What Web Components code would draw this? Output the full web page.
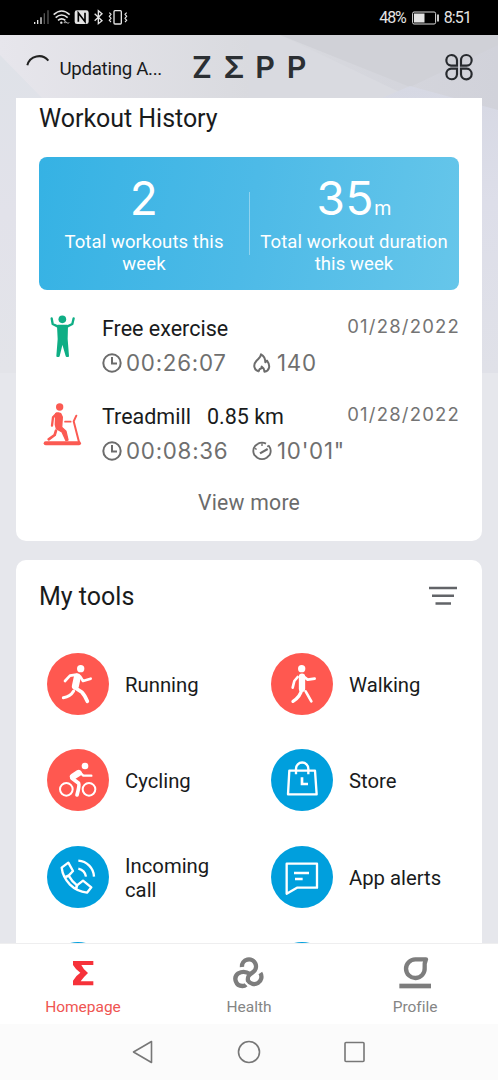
<!DOCTYPE html>
<html lang="en">
<head>
<meta charset="utf-8">
<title>Zepp</title>
<style>
html,body{margin:0;padding:0}
body{width:498px;height:1080px;overflow:hidden;font-family:Roboto,sans-serif;background:#e6e7ec;color:#191b1c}
</style>
</head>
<body>
<zepp-app></zepp-app>
<script>
const define=(name,html)=>customElements.define(name,class extends HTMLElement{
  constructor(){super();this.attachShadow({mode:'open'}).innerHTML=html;}
});

define('status-bar',`<style>
:host{display:flex;height:35px;box-sizing:border-box;background:#000;color:#e4e4e4;justify-content:space-between;align-items:center;padding:0 27px 0 33px;font-size:16px}
.r{display:flex;align-items:center;height:35px}
svg{display:block}
</style>
<svg width="96" height="18" viewBox="99 27 288 54" fill="none" stroke="#e4e4e4" stroke-width="4">
<path d="M104 66v6M113 60v12M123 52v20"/><path d="M133 40v32M144 31v41" stroke="#555"/>
<path d="M161 44Q185 22 209 44M167 53Q185 37 203 53M174 61Q185 52 196 61" stroke-width="5"/><circle cx="184" cy="68" r="3.500" fill="#e4e4e4" stroke="none"/><path d="M192 68l4-5 4 5zM200 66l4 5 4-5" stroke-width="2"/>
<rect x="224" y="31" width="42" height="41" rx="7" fill="#e4e4e4" stroke="none"/><path d="M235 65V39l20 26V38" stroke="#000" stroke-width="5"/>
<path d="M284 41l22 21-11 9V32l11 9-22 21"/>
<rect x="342" y="32" width="22" height="40" rx="3"/><path d="M328 38l5 5-5 6 5 6-5 6 5 5M380 38l-5 5 5 6-5 6 5 6-5 5" stroke-width="3.500"/>
</svg>
<div class="r"><span style="letter-spacing:-1.100px;margin-right:3px">48%</span>
<svg width="27" height="14" viewBox="0 0 27 14" style="margin:0 5px 0 3px"><rect x=".6" y="1" width="23" height="12" rx="1.500" fill="none" stroke="#ddd"/><path d="M2 2.500h10.500v9H2z" fill="#e4e4e4"/><path d="M26 3.500v7" stroke="#ddd" stroke-width="1.800"/></svg>
<span style="letter-spacing:-.9px">8:51</span></div>`);

define('app-header',`<style>
:host{display:grid;grid-template-columns:26px 33px 133px 1fr 30px;height:63px;box-sizing:border-box;padding-right:24px;align-items:center}
svg{display:block}
.u{font-size:18.700px;letter-spacing:-.3px;padding:4px 0 0 .5px;white-space:nowrap}
.logo{display:flex;font:600 30.500px/30px Inter,sans-serif;color:#2b2f33;padding-top:1px}
.logo span{width:31.600px}
</style>
<i></i>
<svg width="24" height="14" viewBox="78 156 72 42" style="margin-top:-13px"><path d="M82 193A36 36 0 0 1 145 179" fill="none" stroke="#222" stroke-width="6"/></svg>
<span class="u">Updating A...</span>
<div class="logo"><span>Z</span><span>Σ</span><span>P</span><span>P</span></div>
<svg width="30" height="30" viewBox="585 157 90 90" fill="none" stroke="#272a2e" stroke-width="6.500"><path d="M624 198H606A16 16 0 1 1 624 182zM636 198H653A16 16 0 1 0 636 182zM624 207H606A16 16 0 1 0 624 224zM636 207H653A16 16 0 1 1 636 224z"/></svg>`);

define('stat-box',`<style>
:host{display:block;text-align:center;color:#fff;font-size:18.500px;line-height:22px;letter-spacing:.1px;padding-top:20px}
.n{font:400 46px/42px Inter,sans-serif;letter-spacing:.6px;height:42px;margin-bottom:12px}
</style><div class="n"><slot name="value"></slot></div><slot></slot>`);

define('workout-row',`<style>
:host{display:grid;grid-template-columns:63px 1fr;height:87.500px}
.ic{width:48px;height:52px}
.top{display:flex;justify-content:space-between;height:34px;align-items:center;font-size:21.500px;line-height:34px;white-space:pre}
.top .d{font:400 18.500px/29px Inter,sans-serif;letter-spacing:1.200px;margin-right:-1px;color:#747474;height:34px}
.meta{display:flex;height:34px;align-items:center;color:#6f6f6f;font:400 22.300px/34px Inter,sans-serif;letter-spacing:.75px}
</style><div class="ic"><slot name="icon"></slot></div>
<div><div class="top"><span><slot name="title"></slot></span><span class="d"><slot name="date"></slot></span></div><div class="meta"><slot></slot></div></div>`);

define('history-card',`<style>
:host{display:block;height:443px;box-sizing:border-box;background:#fff;margin:0 16px;padding:0 23px;border-radius:0 0 10px 10px}
h2{margin:0;font-weight:400;font-size:25px;line-height:42px;height:59px;letter-spacing:-.04px}
.b{display:grid;grid-template-columns:210px 1fr;height:133px;border-radius:8px;background:linear-gradient(100deg,#35b2e4,#4dbae7 50%,#66c6ea);position:relative;margin-bottom:22px}
.b i{position:absolute;left:209.500px;top:35px;width:1.500px;height:63px;background:#8fd3ef}
.m{font-size:20px;line-height:0;font-weight:400;letter-spacing:0}
svg{display:block}
.clk{width:20px;height:20px;margin-right:4px}
.v{width:126px}
.more{text-align:center;color:#6b6b6b;font-size:21.200px;line-height:31px;letter-spacing:.25px}
</style>
<h2>Workout History</h2>
<div class="b"><stat-box><span slot="value">2</span>Total workouts this<br>week</stat-box><stat-box><span slot="value">35<span class="m">m</span></span>Total workout duration<br>this week</stat-box><i></i></div>
<workout-row>
<svg slot="icon" width="48" height="52" viewBox="27 36 144 156" fill="none" stroke="#0fae85" stroke-linecap="round" stroke-linejoin="round"><circle cx="97" cy="58" r="11.500" fill="#0fae85" stroke="none"/><path d="M65 55l3 17 16 8h27l16-8 4-17" stroke-width="7"/><path d="M84 77h27l-1 40 4 51h-4l-13-45-11 45h-4l4-51z" fill="#0fae85" stroke-width="6"/></svg>
<span slot="title">Free exercise</span><span slot="date">01/28/2022</span>
<svg class="clk" viewBox="0 0 20 20" fill="none" stroke="#6c6c6c" stroke-width="2"><circle cx="10" cy="10" r="8.700"/><path d="M10 4v6.500h5"/></svg><span class="v">00:26:07</span>
<svg width="20" height="20" viewBox="37 156 60 60" fill="none" stroke="#6c6c6c" stroke-width="6" stroke-linejoin="round" style="margin-right:5px"><path d="M58 212C42 207 40 191 50 180C59 171 64 168 64 160C75 166 77 174 77 184L82 179C93 194 90 209 74 212Q75 203 66 197Q66 203 60 204Q57 208 58 212"/></svg><span>140</span>
</workout-row>
<workout-row>
<svg slot="icon" width="48" height="52" viewBox="27 299 144 156" fill="none" stroke="#fb5a52" stroke-linecap="round" stroke-linejoin="round"><circle cx="89" cy="320" r="11" fill="#fb5a52" stroke="none"/><path d="M47 429h100" stroke-width="12"/><path d="M139 346l-8 17 16 62" stroke-width="6"/><path d="M105 364h17" stroke-width="5"/><path d="M80 340l-11 11-3 25" stroke-width="7"/><path d="M77 340q7-5 15 0l5 10-2 31 13 12 6 26-6 2-12-26-17-10-3-12z" fill="#fb5a52" stroke-width="4"/><path d="M78 391l-4 13-18 13" stroke-width="8"/></svg>
<span slot="title">Treadmill   0.85 km</span><span slot="date">01/28/2022</span>
<svg class="clk" viewBox="0 0 20 20" fill="none" stroke="#6c6c6c" stroke-width="2"><circle cx="10" cy="10" r="8.700"/><path d="M10 4v6.500h5"/></svg><span class="v">00:08:36</span>
<svg width="20" height="20" viewBox="37 420 60 60" fill="none" stroke="#6c6c6c" stroke-width="5.500" style="margin-right:5px"><path d="M55 428A26 26 0 0 1 79 428M87 434A26 26 0 0 1 90 462L81 470A26 26 0 0 1 53 470L44 462A26 26 0 0 1 47 434L55 428"/><path d="M61 457l23-13" stroke-width="6.500"/><path d="M67 427v8M45 442l6 3M87 433l-4 4" stroke-width="4"/></svg><span>10'01"</span>
</workout-row>
<div class="more">View more</div>`);

define('tool-item',`<style>
:host{display:flex;align-items:center;gap:16px;height:96.400px;font-size:20.300px;line-height:24px}
.c{width:62px;height:62px;border-radius:50%;background:var(--c,#009fdd);flex:none}
.t{width:100px;padding-top:2px}
</style><div class="c"><slot name="icon"></slot></div><div class="t"><slot></slot></div>`);

define('tools-card',`<style>
:host{display:block;height:480px;box-sizing:border-box;background:#fff;margin:19px 16px 0;border-radius:10px}
header{display:flex;justify-content:space-between;height:75.800px;padding:0 25px 0 23px;font-size:25px;line-height:74px}
header svg{margin-top:26px}
.g{display:grid;grid-template-columns:224px 1fr;padding-left:31px}
.w{--c:#ff5850}
svg{display:block}
</style>
<header><span>My tools</span><svg width="28" height="20" viewBox="0 0 28 20" stroke="#626468" stroke-width="2.400"><path d="M0 2h28M3 9.800h22M6.500 17.500H22"/></svg></header>
<div class="g">
<tool-item class="w"><svg slot="icon" width="62" height="62" viewBox="51 39 186 186" fill="none" stroke="#fff" stroke-linecap="round" stroke-linejoin="round"><circle cx="152" cy="86" r="11" fill="#fff" stroke="none"/><path d="M140 104l-20 3-15 16M151 110l8 13 23-7" stroke-width="8"/><path d="M142 111l-6 28" stroke-width="21"/><path d="M135 143l21 14q8 8 16 27" stroke-width="11"/><path d="M131 153q-10 17-31 20" stroke-width="9"/></svg>Running</tool-item>
<tool-item class="w"><svg slot="icon" width="62" height="62" viewBox="62 279 186 186" fill="none" stroke="#fff" stroke-linecap="round" stroke-linejoin="round"><circle cx="154" cy="326" r="11" fill="#fff" stroke="none"/><path d="M142 351l-10 12-5 20M158 348l14 11 21-3M166 394l17 30" stroke-width="8"/><path d="M155 350v36" stroke-width="19"/><path d="M155 386q-5 25-27 38" stroke-width="10"/></svg>Walking</tool-item>
<tool-item class="w"><svg slot="icon" width="62" height="62" viewBox="51 328 186 186" fill="none" stroke="#fff" stroke-linecap="round" stroke-linejoin="round"><circle cx="165" cy="379" r="10" fill="#fff" stroke="none"/><circle cx="109" cy="449" r="19" stroke-width="6"/><circle cx="177" cy="449" r="19" stroke-width="6"/><path d="M147 396l13 12h24" stroke-width="7"/><path d="M129 411l17-11" stroke-width="19"/><path d="M126 416l20 15q3 5-5 35" stroke-width="11"/></svg>Cycling</tool-item>
<tool-item><svg slot="icon" width="62" height="62" viewBox="62 568 186 186" fill="none" stroke="#fff" stroke-width="7" stroke-linejoin="round"><path d="M117 633h77l5 71h-86z"/><path d="M137 644v-17a18 18 0 0 1 37 0v17"/><path d="M155 653v20h18" stroke-width="8" stroke-linejoin="miter"/></svg>Store</tool-item>
<tool-item><svg slot="icon" width="62" height="62" viewBox="140 79 186 186" fill="none" stroke="#fff" stroke-width="7" stroke-linejoin="round"><path d="M204 129l-20 15q3 28 25 51 20 20 51 24l13-16-25-20-18 14q-15-11-25-29l13-14z"/><path d="M205 168l-10 4M230 197l-3 11" stroke-width="8"/><path d="M234 123a50 50 0 0 1 47 48M234 147a30 30 0 0 1 23 24"/></svg>Incoming call</tool-item>
<tool-item><svg slot="icon" width="62" height="62" viewBox="66 79 186 186" fill="none" stroke="#fff" stroke-width="7" stroke-linejoin="round"><path d="M113 132h91v72h-60l-31 18z"/><path d="M135 160h45M138 178h23"/></svg>App alerts</tool-item>
<tool-item></tool-item><tool-item></tool-item>
</div>`);

define('tab-item',`<style>
:host{display:flex;flex-direction:column;align-items:center;color:#858585;font-size:15.500px;line-height:20px;letter-spacing:-.02px;padding-top:12px;gap:7px}
:host([active]){color:#ef5552}
</style><slot name="icon"></slot><span><slot></slot></span>`);

define('tab-bar',`<style>
:host{display:grid;grid-template-columns:1fr 1fr 1fr;height:81px;background:#fff;border-top:1px solid #eeeeef;box-sizing:border-box}
svg{display:block}
</style>
<tab-item active><svg slot="icon" width="34" height="34" viewBox="198 48 102 102" fill="#f6323a"><path d="M219 63h61v12h-36q5 12 20 24-15 14-22 25h38v12h-61v-14q7-14 22-24-14-9-22-23z"/></svg>Homepage</tab-item>
<tab-item><svg slot="icon" width="34" height="34" viewBox="696 50 102 102" fill="none" stroke="#7d7d7d" stroke-width="13"><path d="M726 83A21 21 0 1 1 758 99C744 108 742 114 744 124A21 21 0 1 0 781 101M750 104C738 96 724 97 715 102A21 21 0 0 0 728 140Q734 140 738 136"/></svg>Health</tab-item>
<tab-item><svg slot="icon" width="34" height="34" viewBox="1194 50 102 102" fill="none" stroke="#7d7d7d"><path d="M1198 140h95" stroke-width="14"/><path d="M1278 60q-5 10-4 26a28 28 0 1 1-28-26z" stroke-width="13" stroke-linejoin="round"/></svg>Profile</tab-item>`);

define('nav-bar',`<style>:host{display:flex;height:56px;background:#fbfbfb;align-items:center;justify-content:center;gap:82px}svg{display:block}</style>
<svg width="24" height="24" viewBox="0 0 24 24" fill="none" stroke="#777" stroke-width="1.600" stroke-linejoin="round"><path d="M20.500 1.500v21L2.500 12z"/></svg>
<svg width="24" height="24" viewBox="0 0 24 24" fill="none" stroke="#777" stroke-width="1.600"><circle cx="12" cy="12" r="10.500"/></svg>
<svg width="24" height="24" viewBox="0 0 24 24" fill="none" stroke="#777" stroke-width="1.600"><rect x="2" y="2.500" width="19" height="19" rx="1"/></svg>`);

define('zepp-app',`<style>
:host{display:flex;flex-direction:column;height:1080px;position:relative}
.bg{position:absolute;inset:35px 0 auto 0;z-index:-1}
main{height:845px;overflow:hidden}
</style>
<svg class="bg" width="498" height="338" viewBox="0 35 498 338"><defs><linearGradient id="h"><stop offset="0" stop-color="#e7e6ec"/><stop offset=".5" stop-color="#d9dadf"/><stop offset="1" stop-color="#d1d2da"/></linearGradient>
<linearGradient id="r" x2="0" y2="1"><stop offset="0" stop-color="#d6d8e3"/><stop offset=".4" stop-color="#dddee9"/><stop offset="1" stop-color="#e0e1e8"/></linearGradient>
<linearGradient id="l" x2="0" y2="1"><stop offset="0" stop-color="#dfe2e8"/><stop offset=".5" stop-color="#e2e2ea"/><stop offset="1" stop-color="#e3e4e9"/></linearGradient></defs>
<path d="M0 35h498v338H0z" fill="url(#h)"/><path d="M0 55l42 43v275H0z" fill="url(#l)"/><path d="M280 35l132 63h-30L249 98V35z" fill="#d9dae0"/><path d="M280 35l130 52 88-42V35z" fill="#d0d1d7"/><path d="M382 98l28-12 88 24v263H382z" fill="url(#r)"/></svg>
<status-bar></status-bar><app-header></app-header>
<main><history-card></history-card><tools-card></tools-card></main>
<tab-bar></tab-bar><nav-bar></nav-bar>`);
</script>
</body>
</html>
